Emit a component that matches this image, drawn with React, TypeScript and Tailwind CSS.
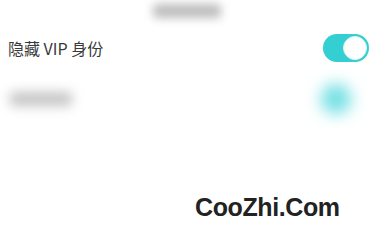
export default function App() {
  return (
    <div className="relative w-[373px] h-[236px] overflow-hidden bg-white font-['Liberation_Sans','Noto_Sans_CJK_SC',sans-serif]">
      <header className="h-[22px] flex items-center justify-center">
        <div className="w-[68px] h-[14px] rounded bg-[#bdbdbd] blur-[5px]" />
      </header>

      <div className="h-[51px] flex items-center justify-between pl-2 pr-[4px]">
        <span className="text-[16px] text-[#3a3a3a] font-['Noto_Sans_CJK_SC',sans-serif]">隐藏 VIP 身份</span>
        <div className="w-[46px] h-[28px] rounded-full bg-[#33cfd2] flex items-center justify-end p-[2px]">
          <div className="w-[24px] h-[24px] rounded-full bg-white border border-[#d8f4f4]" />
        </div>
      </div>

      <div className="h-[51px] flex items-center justify-between pl-[10px] pr-[22px]">
        <div className="w-[62px] h-[14px] rounded bg-[#c4c4c4] blur-[6px]" />
        <div className="w-[30px] h-[30px] rounded-full bg-[#6fdfe2] blur-[8px]" />
      </div>

      <div className="absolute left-[195px] top-[192px] text-[25px] leading-[30px] font-bold text-[#222] tracking-[-0.4px]">
        CooZhi.Com
      </div>
    </div>
  );
}
